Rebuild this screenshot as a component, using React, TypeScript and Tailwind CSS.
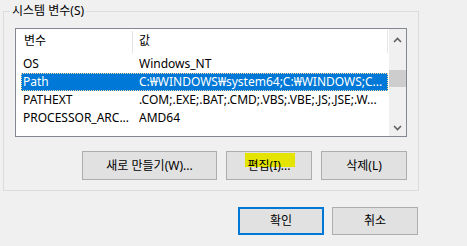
import React from "react";

const font = { fontFamily: '"Noto Sans", "Noto Sans CJK KR", sans-serif' };

function Chevron({ up }: { up?: boolean }) {
  return (
    <svg width="9" height="6" viewBox="0 0 9 6">
      <path
        d={up ? "M1 5 L4.5 1.5 L8 5" : "M1 1 L4.5 4.5 L8 1"}
        fill="none"
        stroke="#606060"
        strokeWidth="1.6"
      />
    </svg>
  );
}

const rows = [
  { name: "OS", value: "Windows_NT" },
  { name: "Path", value: "C:\u20A9WINDOWS\u20A9system64;C:\u20A9WINDOWS;C...", selected: true },
  { name: "PATHEXT", value: ".COM;.EXE;.BAT;.CMD;.VBS;.VBE;.JS;.JSE;.W..." },
  { name: "PROCESSOR_ARC...", value: "AMD64" },
];

export default function App() {
  return (
    <div
      className="w-[467px] h-[246px] bg-[#f0f0f0] overflow-hidden text-[12px] text-black leading-none"
      style={font}
    >
      <div className="pt-[11px] pl-[3px]">
        <div className="relative w-[416px] h-[180px] border border-[#dcdcdc]">
          <div className="absolute left-[6px] top-[-8px] bg-[#f0f0f0] px-[2px] text-[12px] leading-[14px]">
            시스템 변수(S)
          </div>
          <div className="pt-[16px] pl-[11px]">
            <div className="w-[392px] h-[109px] border border-[#828790] bg-white flex">
              <div className="w-[373px] flex flex-col">
                <div className="h-[26px] flex items-center relative">
                  <div className="w-[116px] pl-[8px] pb-[2px]">변수</div>
                  <div className="w-[1px] h-[23px] bg-[#e5e5e5]" />
                  <div className="pl-[6px] pb-[2px]">값</div>
                  <div className="absolute right-[1px] top-[1px] w-[1px] h-[23px] bg-[#e5e5e5]" />
                </div>
                {rows.map((r) => (
                  <div
                    key={r.name}
                    className={
                      "ml-[5px] w-[367px] h-[18px] flex items-center " +
                      (r.selected
                        ? "bg-[#0078d7] text-white outline outline-1 outline-dotted outline-[#f5d5a0] -outline-offset-1"
                        : "")
                    }
                  >
                    <div className="w-[118px] pl-[2px] whitespace-nowrap">{r.name}</div>
                    <div className="whitespace-nowrap">{r.value}</div>
                  </div>
                ))}
              </div>
              <div className="w-[17px] bg-[#f0f0f0] flex flex-col items-center">
                <div className="h-[19px] flex items-center justify-center mt-[1px]">
                  <Chevron up />
                </div>
                <div className="h-[21px]" />
                <div className="w-[17px] h-[17px] bg-[#cdcdcd]" />
                <div className="flex-1" />
                <div className="h-[17px] flex items-center justify-center">
                  <Chevron />
                </div>
              </div>
            </div>
          </div>
          <div className="pt-[14px] pl-[78px] flex gap-[9px]">
            <button className="w-[135px] h-[29px] bg-[#e1e1e1] border border-[#adadad] flex items-center justify-center">
              새로 만들기(W)...
            </button>
            <button className="relative w-[86px] h-[29px] bg-[#e1e1e1] border border-[#adadad] flex items-center justify-center">
              <span className="absolute left-[18px] top-[1px] w-[50px] h-[14px] bg-[#e4e400]" />
              <span className="relative">편집(I)...</span>
            </button>
            <button className="w-[86px] h-[29px] bg-[#e1e1e1] border border-[#adadad] flex items-center justify-center">
              삭제(L)
            </button>
          </div>
        </div>
      </div>
      <div className="pt-[16px] pl-[238px] flex gap-[8px]">
        <button className="w-[86px] h-[28px] bg-[#e1e1e1] border-2 border-[#0078d7] flex items-center justify-center">
          확인
        </button>
        <button className="w-[86px] h-[28px] bg-[#e1e1e1] border border-[#adadad] flex items-center justify-center">
          취소
        </button>
      </div>
    </div>
  );
}
